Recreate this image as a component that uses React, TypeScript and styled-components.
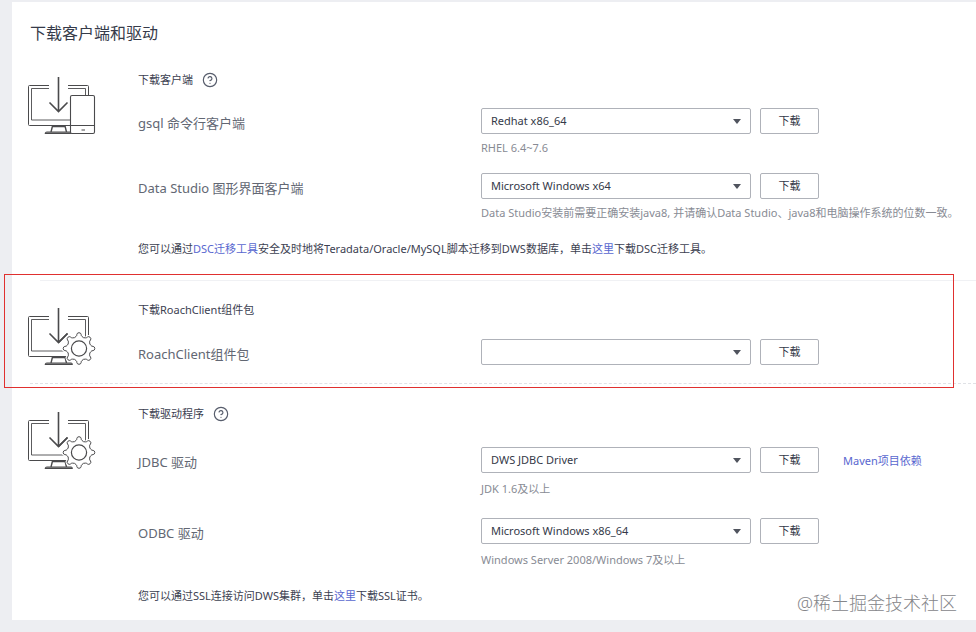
import React from "react";
import styled, { createGlobalStyle } from "styled-components";
import { CircleHelp } from "lucide-react";

const GlobalStyle = createGlobalStyle`
  *, *::before, *::after { box-sizing: border-box; }
  body {
    margin: 0;
    background: #edeef2;
    color: #3c4151;
    font-family: "Noto Sans", "Noto Sans CJK SC", sans-serif;
    font-size: 11px;
    line-height: 16px;
  }
`;

const Page = styled.div`
  padding: 2px 0 12px 12px;
`;

const Panel = styled.main`
  position: relative;
  background: #fff;
  padding: 19px 0 16px;
`;

const Title = styled.h1`
  margin: 0 0 27px 18px;
  font-size: 16px;
  line-height: 24px;
  font-weight: 400;
  color: #363b4a;
`;

const Section = styled.section`
  position: relative;
  display: grid;
  grid-template-columns: 111px minmax(0, 1fr);
  padding-left: 15px;
`;

const Divider = styled.hr`
  margin: 23px 0 21px 28px;
  border: 0;
  border-top: 1px solid #f0f1f4;
`;

const DashedDivider = styled.hr`
  margin: 16px 0 22px 18px;
  border: 0;
  border-top: 1px dashed #e0e2e6;
`;

const Highlight = styled.div`
  position: absolute;
  inset: -28px 22px -21px -8px;
  border: 1px solid #e0302f;
  pointer-events: none;
`;

const Drawing = styled.svg<{ $top: number }>`
  width: 70px;
  height: 60px;
  margin-top: ${(p) => p.$top}px;
  fill: none;
  stroke: #4a4a4c;
`;

const SectionHead = styled.header<{ $gap: number }>`
  display: flex;
  align-items: center;
  gap: 9px;
  height: 16px;
  margin-bottom: ${(p) => p.$gap}px;
`;

const SectionTitle = styled.h2`
  margin: 0;
  font-size: 11px;
  font-weight: 400;
`;

const HelpButton = styled.button`
  display: flex;
  padding: 0;
  border: 0;
  background: none;
  color: #575d6c;
`;

const Hint = styled.p`
  margin: 0;
  color: #888b94;
  white-space: nowrap;
`;

const Rows = styled.div<{ $gap: number; $hintGap: number }>`
  display: grid;
  gap: ${(p) => p.$gap}px;

  ${Hint} {
    margin-top: ${(p) => p.$hintGap}px;
  }
`;

const Row = styled.div`
  display: grid;
  grid-template-columns: 343px minmax(0, 1fr);
`;

const RowLabel = styled.label`
  padding-top: 2px;
  font-size: 13px;
  line-height: 26px;
  color: #626773;
`;

const Controls = styled.div`
  display: flex;
  align-items: center;
`;

const SelectBox = styled.div`
  position: relative;
  width: 270px;
`;

const Select = styled.select`
  appearance: none;
  display: block;
  width: 100%;
  height: 26px;
  padding: 0 28px 1px 9px;
  border: 1px solid #afb2b9;
  border-radius: 2px;
  background: #fff;
  color: #343948;
  font: inherit;
`;

const Caret = styled.svg`
  position: absolute;
  top: 11px;
  right: 10px;
  width: 8px;
  height: 5px;
  fill: #50545e;
  pointer-events: none;
`;

const DownloadButton = styled.button`
  width: 59px;
  height: 26px;
  margin-left: 9px;
  padding: 0;
  border: 1px solid #afb2b9;
  border-radius: 2px;
  background: #fff;
  color: #343948;
  font: inherit;
`;

const Link = styled.a`
  color: #5867cf;
  text-decoration: none;
`;

const SideLink = styled(Link)`
  margin-left: 24px;
  padding-top: 2px;
`;

const Note = styled.p`
  margin: 20px 0 0;
`;

const Watermark = styled.div`
  position: absolute;
  right: 19px;
  bottom: 5px;
  font-size: 18px;
  line-height: 24px;
  font-weight: 300;
  color: #85868a;
`;

function gearPath(cx: number, cy: number) {
  const pt = (deg: number, r: number) => {
    const a = (deg * Math.PI) / 180;
    return `${(cx + r * Math.cos(a)).toFixed(2)} ${(cy + r * Math.sin(a)).toFixed(2)}`;
  };
  let d = `M${pt(-14, 12.4)}`;
  for (let i = 0; i < 8; i++) {
    const a = i * 45;
    d += `Q${pt(a - 10, 12.6)} ${pt(a - 8.5, 14.3)}`;
    d += `Q${pt(a - 7, 15.8)} ${pt(a, 15.8)}`;
    d += `Q${pt(a + 7, 15.8)} ${pt(a + 8.5, 14.3)}`;
    d += `Q${pt(a + 10, 12.6)} ${pt(a + 14, 12.4)}`;
    d += `Q${pt(a + 22.5, 11.2)} ${pt(a + 31, 12.4)}`;
  }
  return d + "Z";
}

function Monitor() {
  return (
    <>
      <path d="M22 9.5H2.5q-1 0-1 1v38q0 1 1 1h58q1 0 1-1v-38q0-1-1-1H41" />
      <path d="M22 12.5H4.5v31.500h54V12.5H41" strokeWidth="0.9" />
      <path d="M25.500 50l-1.500 6M38 50l1.500 6M25 50.500h13.500" strokeWidth="1.400" />
      <path d="M18 57.500q0-1.500 2-1.500h24q1.500 0 1.500 1.500z" fill="#999" />
      <path d="M31.500 1v34.500M22.500 26.500l9 9 9-9" strokeWidth="1.600" />
    </>
  );
}

function ClientDrawing() {
  return (
    <Drawing $top={4} viewBox="0 0 70 60" aria-hidden="true">
      <Monitor />
      <rect x="43.500" y="19.500" width="24" height="38" rx="1.500" fill="#fff" strokeWidth="1.100" />
      <path d="M43.500 49.500h24M54.500 54h3.500" />
    </Drawing>
  );
}

function GearDrawing() {
  return (
    <Drawing $top={5} viewBox="0 0 70 60" aria-hidden="true">
      <Monitor />
      <path d={gearPath(52, 41.5)} fill="#fff" stroke="#fff" strokeWidth="3" />
      <path d="M31.500 35.500l9-9" strokeWidth="1.600" />
      <path d={gearPath(52, 41.5)} fill="#fff" />
      <circle cx="52" cy="41.500" r="7.600" strokeWidth="1.200" />
    </Drawing>
  );
}

interface DownloadRowProps {
  id: string;
  label: string;
  value?: string;
  hint?: string;
  children?: React.ReactNode;
}

function DownloadRow({ id, label, value = "", hint, children }: DownloadRowProps) {
  return (
    <Row>
      <RowLabel htmlFor={id}>{label}</RowLabel>
      <div>
        <Controls>
          <SelectBox>
            <Select id={id} defaultValue={value}>
              <option value={value}>{value}</option>
            </Select>
            <Caret viewBox="0 0 8 5" aria-hidden="true">
              <path d="M0 0h8L4 5z" />
            </Caret>
          </SelectBox>
          <DownloadButton type="button">下载</DownloadButton>
          {children}
        </Controls>
        {hint && <Hint>{hint}</Hint>}
      </div>
    </Row>
  );
}

function Head({ title, gap, help }: { title: string; gap: number; help?: boolean }) {
  return (
    <SectionHead $gap={gap}>
      <SectionTitle>{title}</SectionTitle>
      {help && (
        <HelpButton type="button" aria-label="帮助">
          <CircleHelp size={16} strokeWidth={1.75} />
        </HelpButton>
      )}
    </SectionHead>
  );
}

export default function App() {
  return (
    <>
      <GlobalStyle />
      <Page>
        <Panel lang="zh-CN">
          <Title>下载客户端和驱动</Title>

          <Section>
            <ClientDrawing />
            <div>
              <Head title="下载客户端" gap={20} help />
              <Rows $gap={17} $hintGap={6}>
                <DownloadRow id="gsql" label="gsql 命令行客户端" value="Redhat x86_64" hint="RHEL 6.4~7.6" />
                <DownloadRow
                  id="studio"
                  label="Data Studio 图形界面客户端"
                  value="Microsoft Windows x64"
                  hint="Data Studio安装前需要正确安装java8, 并请确认Data Studio、java8和电脑操作系统的位数一致。"
                />
              </Rows>
              <Note>
                您可以通过<Link href="#dsc">DSC迁移工具</Link>
                安全及时地将Teradata/Oracle/MySQL脚本迁移到DWS数据库，单击<Link href="#dsc-download">这里</Link>
                下载DSC迁移工具。
              </Note>
            </div>
          </Section>

          <Divider />

          <Section>
            <GearDrawing />
            <div>
              <Head title="下载RoachClient组件包" gap={21} />
              <DownloadRow id="roach" label="RoachClient组件包" />
            </div>
            <Highlight />
          </Section>

          <DashedDivider />

          <Section>
            <GearDrawing />
            <div>
              <Head title="下载驱动程序" gap={25} help />
              <Rows $gap={21} $hintGap={8}>
                <DownloadRow id="jdbc" label="JDBC 驱动" value="DWS JDBC Driver" hint="JDK 1.6及以上">
                  <SideLink href="#maven">Maven项目依赖</SideLink>
                </DownloadRow>
                <DownloadRow
                  id="odbc"
                  label="ODBC 驱动"
                  value="Microsoft Windows x86_64"
                  hint="Windows Server 2008/Windows 7及以上"
                />
              </Rows>
              <Note>
                您可以通过SSL连接访问DWS集群，单击<Link href="#ssl">这里</Link>下载SSL证书。
              </Note>
            </div>
          </Section>

          <Watermark>@稀土掘金技术社区</Watermark>
        </Panel>
      </Page>
    </>
  );
}
